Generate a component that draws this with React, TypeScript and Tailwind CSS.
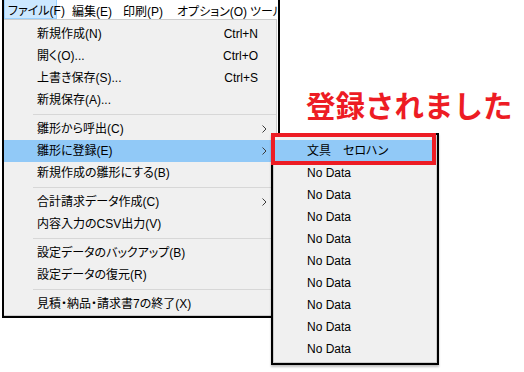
import type React from "react";

type Item =
	| { kind: "row"; label: string; shortcut?: string; arrow?: boolean; active?: boolean }
	| { kind: "sep" };

const MENU: Item[] = [
	{ kind: "row", label: "新規作成(N)", shortcut: "Ctrl+N" },
	{ kind: "row", label: "開く(O)...", shortcut: "Ctrl+O" },
	{ kind: "row", label: "上書き保存(S)...", shortcut: "Ctrl+S" },
	{ kind: "row", label: "新規保存(A)..." },
	{ kind: "sep" },
	{ kind: "row", label: "雛形から呼出(C)", arrow: true },
	{ kind: "row", label: "雛形に登録(E)", arrow: true, active: true },
	{ kind: "row", label: "新規作成の雛形にする(B)" },
	{ kind: "sep" },
	{ kind: "row", label: "合計請求データ作成(C)", arrow: true },
	{ kind: "row", label: "内容入力のCSV出力(V)" },
	{ kind: "sep" },
	{ kind: "row", label: "設定データのバックアップ(B)" },
	{ kind: "row", label: "設定データの復元(R)" },
	{ kind: "sep" },
	{ kind: "row", label: "見積・納品・請求書7の終了(X)" },
];

const SUB = ["文具　セロハン", ...Array.from({ length: 9 }, () => "No Data")];

const Chevron: React.FC = () => (
	<svg width="5" height="8" viewBox="0 0 5 8" className="block">
		<polyline points="0.5,0.5 4,4 0.5,7.5" fill="none" stroke="#3c3c3c" strokeWidth="1" />
	</svg>
);

export default function App() {
	return (
		<div className="relative w-[524px] h-[372px] bg-white overflow-hidden text-[12px] text-black [font-family:'Liberation_Sans','Noto_Sans_CJK_JP',sans-serif] [font-feature-settings:'palt']">
			{/* main window frame */}
			<div className="ml-[2px] w-[278px] h-[318px] border-x-2 border-b-2 border-black bg-white overflow-hidden">
				<div className="flex h-[19px] whitespace-nowrap">
					<div className="shrink-0 w-[53px] h-[19px] pl-[3px] pt-[4px] leading-[14px] bg-[#cce8ff] border border-t-0 border-[#99d1ff]">
						ファイル(F)
					</div>
					<div className="shrink-0 ml-[15px] w-[51px] pt-[5px] leading-[14px]">編集(E)</div>
					<div className="shrink-0 w-[54px] pt-[5px] leading-[14px]">印刷(P)</div>
					<div className="shrink-0 w-[73px] pt-[5px] leading-[14px]">オプション(O)</div>
					<div className="shrink-0 pt-[5px] leading-[14px]">ツール(T)</div>
				</div>
				<div className="mr-px h-[297px] pt-[3px] bg-[#f0f0f0] border-t border-r border-b border-[#cccccc]">
					{MENU.map((it, i) =>
						it.kind === "sep" ? (
							<div key={`s${i}`} className="h-[7px] flex items-center pl-[29px]">
								<div className="h-px w-full bg-[#d7d7d7]" />
							</div>
						) : (
							<div
								key={`r${i}`}
								className={`h-[22px] flex items-center pl-[33px] pr-[9px] whitespace-nowrap ${it.active ? "bg-[#91c9f7]" : ""}`}
							>
								<span className="flex-1">{it.label}</span>
								{it.shortcut && <span className="mr-[9px]">{it.shortcut}</span>}
								{it.arrow && <Chevron />}
							</div>
						),
					)}
				</div>
			</div>

			{/* submenu popup */}
			<div className="absolute left-[271px] top-[133px] w-[168px] h-[232px] border-2 border-black bg-white shadow-[0_2px_2px_rgba(0,0,0,0.25)]">
				<div className="h-full pt-[4px] bg-[#f0f0f0] border border-[#cccccc]">
					{SUB.map((s, i) => (
						<div
							key={`sub${i}`}
							className={`h-[22px] flex items-center pl-[33px] whitespace-nowrap ${i === 0 ? "bg-[#91c9f7]" : ""}`}
						>
							{s}
						</div>
					))}
				</div>
			</div>

			{/* red annotation */}
			<div className="absolute left-[271px] top-[133px] w-[165px] h-[32px] border-4 border-[#ed1c24]" />
			<div className="absolute left-[306px] top-[90px] text-[29.5px] leading-none font-bold text-[#ed1c24] whitespace-nowrap [font-family:'Noto_Sans_CJK_JP',sans-serif] [font-feature-settings:normal]">
				登録されました
			</div>
		</div>
	);
}
